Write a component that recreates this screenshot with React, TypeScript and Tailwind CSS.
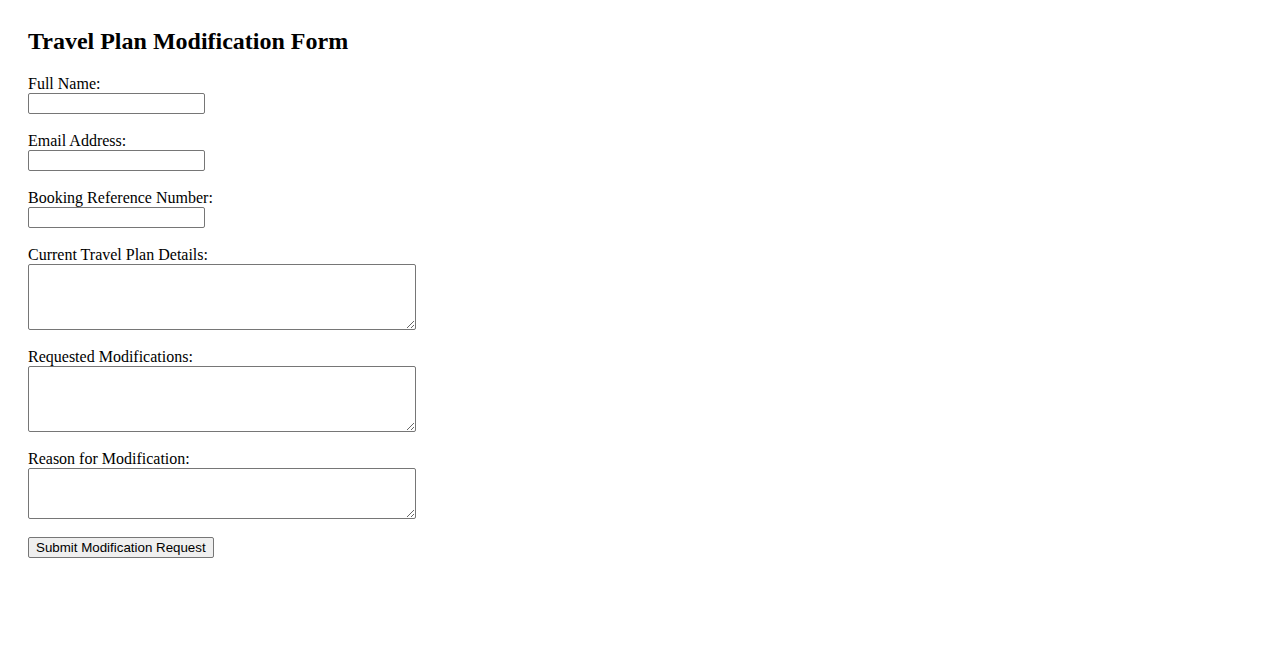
import React from 'react'

const fields = [
  { label: 'Full Name:', type: 'input' },
  { label: 'Email Address:', type: 'input' },
  { label: 'Booking Reference Number:', type: 'input' },
  { label: 'Current Travel Plan Details:', type: 'textarea', h: 'h-[66px]' },
  { label: 'Requested Modifications:', type: 'textarea', h: 'h-[66px]' },
  { label: 'Reason for Modification:', type: 'textarea', h: 'h-[51px]' },
]

export default function App() {
  return (
    <div className="min-h-screen bg-white p-[28px] text-black font-['Liberation_Serif','Times_New_Roman',serif]">
      <h2 className="text-[24px] leading-[27px] font-bold mb-[20px]">Travel Plan Modification Form</h2>
      <form onSubmit={e => e.preventDefault()}>
        {fields.map(f => (
          <div key={f.label} className="flex flex-col items-start mb-[18px]">
            <label className="text-[16px] leading-[18px] h-[18px]">{f.label}</label>
            {f.type === 'input' ? (
              <input
                type="text"
                className="w-[177px] h-[21px] border border-[#767676] rounded-[2px] px-[2px] text-[13.33px] font-['Liberation_Sans',Arial,sans-serif] bg-white"
              />
            ) : (
              <textarea
                className={`w-[388px] ${f.h} border border-[#767676] rounded-[2px] p-[2px] text-[13.33px] font-['Liberation_Mono',monospace] bg-white`}
              />
            )}
          </div>
        ))}
        <button
          type="submit"
          className="block h-[21px] px-[7px] border border-[#767676] rounded-[2px] bg-[#efefef] text-[13.33px] leading-[15px] text-black font-['Liberation_Sans',Arial,sans-serif]"
        >
          Submit Modification Request
        </button>
      </form>
    </div>
  )
}
